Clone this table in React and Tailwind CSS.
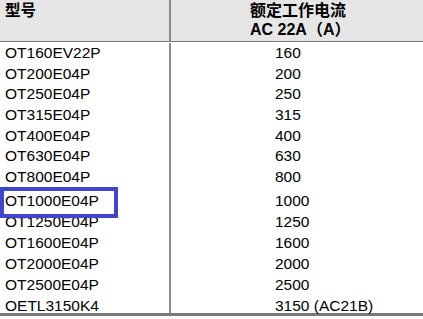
const rows = [
  ["OT160EV22P", "160"],
  ["OT200E04P", "200"],
  ["OT250E04P", "250"],
  ["OT315E04P", "315"],
  ["OT400E04P", "400"],
  ["OT630E04P", "630"],
  ["OT800E04P", "800"],
  ["OT1000E04P", "1000"],
  ["OT1250E04P", "1250"],
  ["OT1600E04P", "1600"],
  ["OT2000E04P", "2000"],
  ["OT2500E04P", "2500"],
  ["OETL3150K4", "3150 (AC21B)"],
];

function rowClass(i) {
  if (i < 7) return "h-[20.65px]";
  if (i === 7) return "h-[24.5px] pt-[3.5px]";
  if (i === 12) return "h-[17px]";
  return "h-[21px]";
}

export default function App() {
  return (
    <div
      className="relative w-[423px] h-[319px] bg-white text-black overflow-hidden"
      style={{ fontFamily: '"Liberation Sans", "Noto Sans CJK SC", sans-serif' }}
    >
      <div className="flex h-[42px] bg-[#e6e6e6] border-b-[1.5px] border-[#7a7a7a] font-bold text-[15.5px] leading-[18.5px]">
        <div className="w-[171px] shrink-0 border-r-2 border-[#8a8a8a] pl-[5px] pt-[2px]">型号</div>
        <div className="pl-[79px] pt-[2px] text-[16px]">
          <div>额定工作电流</div>
          <div>AC 22A（A）</div>
        </div>
      </div>

      <div className="pt-[1px] border-b-[3px] border-[#7a7a7a] text-[15.5px] leading-[20.65px]">
        {rows.map(([model, current], i) => (
          <div key={model} className="flex">
            <div className={`w-[171px] shrink-0 border-r-2 border-[#8a8a8a] pl-[5px] ${rowClass(i)}`}>
              {model}
            </div>
            <div className={`pl-[104px] ${rowClass(i)}`}>{current}</div>
          </div>
        ))}
      </div>

      <div className="absolute left-0 top-[187px] w-[118px] h-[31px] border-4 border-[#3f46cc]" />
    </div>
  );
}
